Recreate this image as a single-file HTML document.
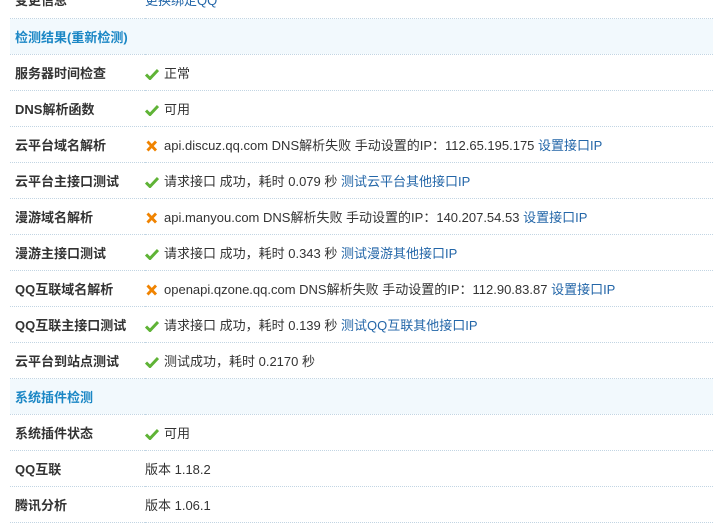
<html><head><style>
body{margin:0;width:713px;height:522px;overflow:hidden;background:#fff;font:12px "Liberation Sans","Noto Sans CJK SC",sans-serif;color:#333}
table{position:absolute;left:10px;top:-18px;width:703px;border-collapse:collapse;table-layout:fixed}
td{height:36px;box-sizing:border-box;padding:0;border-bottom:1px dotted #c2d5e3;vertical-align:middle;white-space:nowrap;overflow:hidden;font-size:13px}
td.l{padding-left:5px;font-weight:bold;color:#333;font-size:13px}
tr.h td{background:#f2f9fd;color:#1b87c5;font-weight:bold;padding-left:5px;font-size:13px}
a{color:#2366a8;text-decoration:none}
.ok,.no{display:inline-block;width:14px;height:12px;vertical-align:-2px;margin-right:5px}
</style></head><body>
<svg width="0" height="0" style="position:absolute"><defs>
<symbol id="ok" viewBox="0 0 14 12"><path d="M1 6.5 L5 10.5 L13 2" stroke="#5fb336" stroke-width="3" fill="none"/></symbol>
<symbol id="no" viewBox="0 0 14 12"><path d="M2.5 1.5 L11 10.5 M11 1.5 L2.5 10.5" stroke="#f08300" stroke-width="2.8" fill="none"/></symbol>
</defs></svg>
<table>
<colgroup><col style="width:135px"><col></colgroup>
<tr><td class="l">变更信息</td><td><a>更换绑定QQ</a></td></tr>
<tr class="h"><td colspan="2">检测结果(重新检测)</td></tr>
<tr><td class="l">服务器时间检查</td><td><svg class="ok"><use href="#ok"/></svg>正常</td></tr>
<tr><td class="l">DNS解析函数</td><td><svg class="ok"><use href="#ok"/></svg>可用</td></tr>
<tr><td class="l">云平台域名解析</td><td><svg class="no"><use href="#no"/></svg>api.discuz.qq.com DNS解析失败 手动设置的IP：112.65.195.175 <a>设置接口IP</a></td></tr>
<tr><td class="l">云平台主接口测试</td><td><svg class="ok"><use href="#ok"/></svg>请求接口 成功，耗时 0.079 秒 <a>测试云平台其他接口IP</a></td></tr>
<tr><td class="l">漫游域名解析</td><td><svg class="no"><use href="#no"/></svg>api.manyou.com DNS解析失败 手动设置的IP：140.207.54.53 <a>设置接口IP</a></td></tr>
<tr><td class="l">漫游主接口测试</td><td><svg class="ok"><use href="#ok"/></svg>请求接口 成功，耗时 0.343 秒 <a>测试漫游其他接口IP</a></td></tr>
<tr><td class="l">QQ互联域名解析</td><td><svg class="no"><use href="#no"/></svg>openapi.qzone.qq.com DNS解析失败 手动设置的IP：112.90.83.87 <a>设置接口IP</a></td></tr>
<tr><td class="l">QQ互联主接口测试</td><td><svg class="ok"><use href="#ok"/></svg>请求接口 成功，耗时 0.139 秒 <a>测试QQ互联其他接口IP</a></td></tr>
<tr><td class="l">云平台到站点测试</td><td><svg class="ok"><use href="#ok"/></svg>测试成功，耗时 0.2170 秒</td></tr>
<tr class="h"><td colspan="2">系统插件检测</td></tr>
<tr><td class="l">系统插件状态</td><td><svg class="ok"><use href="#ok"/></svg>可用</td></tr>
<tr><td class="l">QQ互联</td><td>版本 1.18.2</td></tr>
<tr><td class="l">腾讯分析</td><td>版本 1.06.1</td></tr>
</table>
</body></html>
